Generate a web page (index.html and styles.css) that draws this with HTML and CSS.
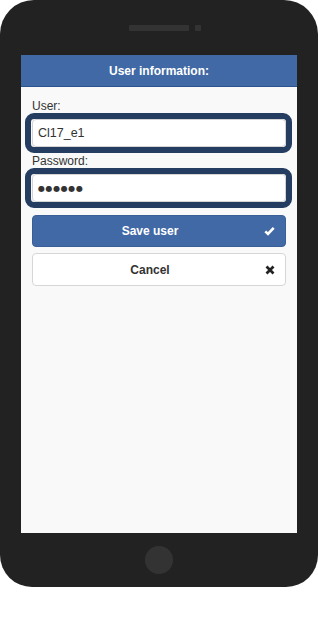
FILE: index.html
```html
<!DOCTYPE html>
<html>
<head>
<meta charset="utf-8">
<link rel="stylesheet" href="styles.css">
</head>
<body>
<div class="phone">
  <div class="phone-top">
    <span class="speaker"></span>
    <span class="camera"></span>
  </div>
  <div class="screen">
    <div class="header">User information:</div>
    <div class="form">
      <div class="label">User:</div>
      <div class="focus-ring">
        <div class="input">Cl17_e1</div>
      </div>
      <div class="label">Password:</div>
      <div class="focus-ring">
        <div class="input"><span class="dots">●●●●●●</span></div>
      </div>
      <div class="btn btn-primary">
        <span class="btn-text">Save user</span>
        <svg class="btn-icon" width="11" height="10" viewBox="0 0 11 10"><path d="M1.3 5.4 L4 8 L9.7 1.8" fill="none" stroke="#fff" stroke-width="2.6" stroke-linejoin="miter" stroke-linecap="butt"/></svg>
      </div>
      <div class="btn btn-default">
        <span class="btn-text">Cancel</span>
        <svg class="btn-icon" width="10" height="10" viewBox="0 0 10 10"><path d="M1.5 1.5 L8.5 8.5 M8.5 1.5 L1.5 8.5" fill="none" stroke="#222" stroke-width="2.7"/></svg>
      </div>
    </div>
  </div>
  <div class="phone-bottom">
    <span class="home"></span>
  </div>
</div>
</body>
</html>
```
FILE: styles.css
```css
html, body {
  margin: 0;
  padding: 0;
  background: #fff;
}
body {
  font-family: "Liberation Sans", Arial, sans-serif;
}
.phone {
  width: 318px;
  height: 587px;
  background: #222;
  border-radius: 34px 34px 32px 32px;
  display: flex;
  flex-direction: column;
  align-items: center;
}
.phone-top {
  height: 55px;
  display: flex;
  align-items: flex-start;
  justify-content: center;
  box-sizing: border-box;
  padding-top: 25px;
  padding-left: 12px;
  gap: 6px;
}
.speaker {
  width: 60px;
  height: 6px;
  background: #333;
  border-radius: 1px;
}
.camera {
  width: 6px;
  height: 6px;
  background: #333;
  border-radius: 1px;
}
.screen {
  width: 276px;
  height: 478px;
  background: #f9f9f9;
}
.header {
  height: 31px;
  line-height: 32px;
  background: #4169a6;
  border-bottom: 1px solid #2c5490;
  color: #fff;
  font-weight: bold;
  font-size: 12px;
  text-align: center;
}
.form {
  padding: 11px 11px 0 11px;
  display: flex;
  flex-direction: column;
}
.label {
  font-size: 12px;
  line-height: 13px;
  height: 13px;
  padding-top: 2px;
  color: #333;
}
.focus-ring {
  margin: 0 -6px 0 -7px;
  border: 6px solid #243d61;
  border-radius: 9px;
  padding: 0 0 0 1px;
}
.input {
  height: 26px;
  line-height: 27px;
  background: #fff;
  border: 1px solid #d4d4d4;
  border-radius: 4px;
  padding-left: 5px;
  font-size: 12.5px;
  color: #333;
}
.dots {
  font-family: "DejaVu Sans", sans-serif;
  font-size: 8px;
  letter-spacing: 0.6px;
  color: #333;
  position: relative;
  top: -1px;
}
.btn {
  display: flex;
  align-items: center;
  justify-content: center;
  position: relative;
  border-radius: 4px;
  font-size: 12px;
  font-weight: bold;
  padding: 0 29px 0 11px;
}
.btn-primary {
  margin-top: 7px;
  height: 30px;
  background: #4169a6;
  border: 1px solid #3a5f98;
  color: #fff;
}
.btn-default {
  margin-top: 6px;
  height: 31px;
  background: #fff;
  border: 1px solid #d6d6d6;
  color: #333;
}
.btn-icon {
  position: absolute;
  right: 10px;
  top: 50%;
  margin-top: -5px;
}
.phone-bottom {
  flex: 1;
  display: flex;
  align-items: center;
  justify-content: center;
}
.home {
  width: 28px;
  height: 28px;
  border-radius: 50%;
  background: #333;
}
```
